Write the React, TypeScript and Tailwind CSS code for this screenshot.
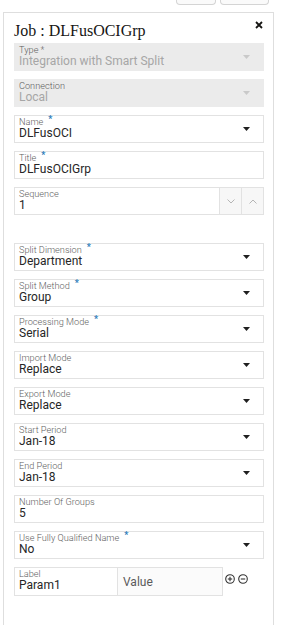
import React from "react";

const Asterisk = () => (
  <span className="ml-[5px] relative -top-[2px] text-[9px] font-bold leading-none text-[#2b7bb9]">*</span>
);

const Arrow = ({ disabled }: { disabled?: boolean }) => (
  <svg width="7" height="4" viewBox="0 0 7 4" className="shrink-0">
    <path d="M0 0 L7 0 L3.5 4 Z" fill={disabled ? "#c9c9c9" : "#1f1f1f"} />
  </svg>
);

type FieldProps = {
  label: string;
  value: string;
  required?: boolean;
  disabled?: boolean;
  select?: boolean;
};

const Field = ({ label, value, required, disabled, select }: FieldProps) => (
  <div
    className={`h-[28px] flex items-center pl-[4px] pr-[13px] border ${
      disabled ? "bg-[#ebebeb] border-[#ebebeb]" : "bg-white border-[#e2e2e2]"
    }`}
  >
    <div className="flex-1 min-w-0 self-stretch pt-[1px] flex flex-col">
      <div className={`h-[10px] text-[9.2px] leading-[10px] font-light flex items-start ${disabled ? "text-[#5c5c5c]" : "text-[#5e5e5e]"}`}>
        {label}
        {required && <Asterisk />}
      </div>
      <div className={`text-[12px] leading-[13px] truncate ${disabled ? "text-[#a6a6a6]" : "text-[#262626]"}`}>
        {value}
      </div>
    </div>
    {select && <Arrow disabled={disabled} />}
  </div>
);

const Chevron = ({ up }: { up?: boolean }) => (
  <svg width="8" height="5" viewBox="0 0 8 5">
    <path d={up ? "M0.5 4.5 L4 1 L7.5 4.5" : "M0.5 0.5 L4 4 L7.5 0.5"} fill="none" stroke="#b5b5b5" strokeWidth="1" />
  </svg>
);

const SequenceField = () => (
  <div className="h-[28px] flex border border-[#e2e2e2] bg-white">
    <div className="flex-1 pl-[4px] pt-[1px] flex flex-col">
      <div className="h-[10px] text-[9.2px] leading-[10px] font-light text-[#5e5e5e]">Sequence</div>
      <div className="text-[12px] leading-[13px] text-[#262626]">1</div>
    </div>
    <div className="w-[22px] border-l border-[#e2e2e2] bg-[#f7f7f7] flex items-center justify-center">
      <Chevron />
    </div>
    <div className="w-[22px] border-l border-[#e2e2e2] bg-[#f7f7f7] flex items-center justify-center">
      <Chevron up />
    </div>
  </div>
);

const CircleIcon = ({ plus }: { plus?: boolean }) => (
  <svg width="10" height="10" viewBox="0 0 10 10">
    <circle cx="5" cy="5" r="4.3" fill="none" stroke="#333" strokeWidth="1.1" />
    <path d="M2.8 5 H7.2" stroke="#333" strokeWidth="1.1" />
    {plus && <path d="M5 2.8 V7.2" stroke="#333" strokeWidth="1.1" />}
  </svg>
);

export default function App() {
  return (
    <div className="w-[285px] h-[625px] overflow-hidden bg-white font-['Roboto',sans-serif]">
      {/* partially visible toolbar buttons */}
      <div className="h-[5px] flex justify-end gap-[4px] pr-[16px]">
        <div className="w-[40px] h-[5px] border border-t-0 border-[#d4d4d4] rounded-b-[4px] bg-[#fafafa]" />
        <div className="w-[49px] h-[5px] border border-t-0 border-[#d4d4d4] rounded-b-[4px] bg-[#fafafa]" />
      </div>

      <div className="mt-[7px] ml-[3px] w-[271px] h-[700px] border border-b-0 border-[#dedede] pt-[8px] pl-[10px] pr-[9px]">
        <div className="h-[20px] mb-[2px] flex items-start justify-between">
          <div className="font-['Liberation_Serif',serif] text-[16px] leading-[20px] text-[#161513]">
            Job : DLFusOCIGrp
          </div>
          <svg width="8" height="8" viewBox="0 0 8 8" className="mr-[1px]">
            <path d="M1 1 L7 7 M7 1 L1 7" stroke="#161513" strokeWidth="1.8" />
          </svg>
        </div>

        <div className="flex flex-col gap-[8px]">
          <Field label="Type *" value="Integration with Smart Split" disabled select />
          <Field label="Connection" value="Local" disabled select />
          <Field label="Name" value="DLFusOCI" required select />
          <Field label="Title" value="DLFusOCIGrp" required />
          <SequenceField />
        </div>

        <div className="mt-[28px] flex flex-col gap-[8px]">
          <Field label="Split Dimension" value="Department" required select />
          <Field label="Split Method" value="Group" required select />
          <Field label="Processing Mode" value="Serial" required select />
          <Field label="Import Mode" value="Replace" select />
          <Field label="Export Mode" value="Replace" select />
          <Field label="Start Period" value="Jan-18" select />
          <Field label="End Period" value="Jan-18" select />
          <Field label="Number Of Groups" value="5" />
          <Field label="Use Fully Qualified Name" value="No" required select />

          <div className="flex items-start">
            <div className="w-[104px] h-[29px] border border-[#e2e2e2] bg-white pl-[4px] pt-[1px] flex flex-col">
              <div className="h-[10px] text-[9.2px] leading-[10px] font-light text-[#5e5e5e]">Label</div>
              <div className="text-[12px] leading-[13px] text-[#262626]">Param1</div>
            </div>
            <div className="w-[105px] h-[29px] border border-l-0 border-[#e2e2e2] bg-[#fbfbfb] pl-[5px] flex items-center text-[12px] text-[#5a5a5a]">
              Value
            </div>
            <div className="ml-[2px] mt-[7px] flex gap-[3px]">
              <CircleIcon plus />
              <CircleIcon />
            </div>
          </div>
        </div>
      </div>
    </div>
  );
}
